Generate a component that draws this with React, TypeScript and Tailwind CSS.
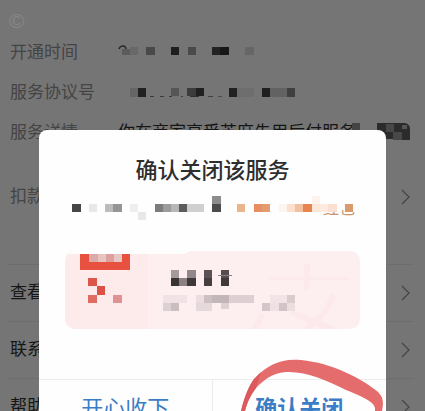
// Service detail page with the "close this service" dialog on top
import type { ReactNode } from 'react';

// x, y, width, height, colour
type Cell = [number, number, number, number, string];

interface MosaicProps {
  cells: Cell[];
  className: string;
  viewBox: string;
  children?: ReactNode;
}

function Mosaic({ cells, className, viewBox, children }: MosaicProps) {
  return (
    <svg className={className} viewBox={viewBox} aria-hidden="true">
      {children}
      {cells.map(([x, y, w, h, fill]) => (
        <rect key={`${x}-${y}-${w}`} x={x} y={y} width={w} height={h} fill={fill} />
      ))}
    </svg>
  );
}

const timeCells: Cell[] = [
  [122, 49, 8, 6, '#5c5c5c'],
  [130, 47, 8, 8, '#696969'],
  [146, 47, 9, 8, '#494949'],
  [171, 47, 8, 8, '#1e1e1e'],
  [188, 47, 8, 8, '#4a4a4a'],
  [212, 47, 8, 8, '#232323'],
  [220, 47, 9, 8, '#171717'],
  [245, 47, 9, 8, '#666666'],
];

const agreementCells: Cell[] = [
  [130, 88, 8, 9, '#656565'],
  [138, 88, 8, 9, '#212121'],
  [150, 96, 4, 1, '#3c3c3c'],
  [160, 96, 4, 1, '#3c3c3c'],
  [169, 96, 3, 1, '#3c3c3c'],
  [171, 88, 8, 8, '#565656'],
  [181, 96, 2, 1, '#3c3c3c'],
  [187, 88, 9, 8, '#3c3c3c'],
  [190, 96, 9, 1, '#303030'],
  [196, 88, 8, 8, '#202020'],
  [208, 96, 5, 1, '#404040'],
  [218, 96, 4, 1, '#4c4c4c'],
  [229, 88, 8, 9, '#222222'],
  [237, 88, 17, 9, '#6e6e6e'],
  [262, 88, 8, 9, '#202020'],
  [270, 88, 17, 9, '#626262'],
  [287, 88, 8, 9, '#404040'],
];

const amountCells: Cell[] = [
  [72, 204, 9, 8, '#464646'],
  [89, 204, 8, 8, '#e8e8e8'],
  [105, 204, 8, 8, '#bcbcbc'],
  [113, 204, 9, 8, '#959595'],
  [130, 204, 8, 8, '#eeeeee'],
  [138, 212, 8, 8, '#e8e8e8'],
  [155, 204, 8, 8, '#7c7c7c'],
  [163, 204, 8, 8, '#9c9c9c'],
  [171, 204, 8, 8, '#b6b6b6'],
  [179, 204, 8, 8, '#5c5c5c'],
  [187, 204, 17, 8, '#cfcfcf'],
  [212, 196, 9, 8, '#8c8c8c'],
  [212, 204, 9, 8, '#4b4b4b'],
  [237, 204, 8, 8, '#e8b58d'],
  [254, 204, 8, 8, '#e88f62'],
  [262, 204, 8, 8, '#e39b70'],
  [279, 204, 8, 8, '#fdf6ef'],
  [287, 204, 8, 8, '#fbe0cf'],
  [295, 204, 8, 8, '#f6bf9f'],
  [303, 204, 9, 8, '#e5854f'],
  [312, 196, 8, 8, '#fef3ec'],
  [312, 204, 8, 8, '#fde7d8'],
  [320, 204, 8, 8, '#fdebe1'],
  [328, 204, 9, 8, '#fbdfd0'],
  [345, 204, 8, 8, '#d99a6c'],
];

const cardCells: Cell[] = [
  [80, 254, 50, 16, '#e8503f'],
  [89, 254, 9, 8, '#dcaaa7'],
  [98, 254, 8, 8, '#e9c3c0'],
  [106, 254, 8, 8, '#dda09c'],
  [114, 254, 8, 8, '#e8c6c4'],
  [88, 278, 9, 8, '#dc574a'],
  [97, 286, 8, 9, '#dd5145'],
  [88, 295, 9, 8, '#df6b61'],
  [113, 295, 9, 8, '#e09292'],
  [171, 270, 8, 8, '#a59a9b'],
  [187, 270, 9, 8, '#928889'],
  [171, 278, 8, 8, '#393334'],
  [179, 278, 8, 8, '#8b8183'],
  [187, 278, 9, 8, '#3e383a'],
  [204, 270, 8, 8, '#5a5254'],
  [204, 278, 8, 8, '#453f40'],
  [221, 270, 8, 8, '#544c4e'],
  [221, 278, 8, 8, '#3f393a'],
  [218, 275, 14, 1, '#8b8183'],
  [163, 295, 24, 8, '#f1e3e5'],
  [163, 303, 8, 8, '#ddd0d2'],
  [171, 303, 8, 8, '#c9bdbf'],
  [196, 295, 8, 8, '#ecdee0'],
  [204, 295, 8, 8, '#cdc0c3'],
  [212, 295, 17, 8, '#c3b6b9'],
  [229, 295, 25, 8, '#decfd2'],
  [196, 303, 16, 8, '#e6d9db'],
  [221, 303, 8, 6, '#ddd0d2'],
  [262, 303, 8, 8, '#d4c7ca'],
  [270, 295, 17, 8, '#f2e4e6'],
  [287, 295, 8, 8, '#d9cccf'],
  [270, 303, 9, 8, '#efe1e3'],
  [279, 303, 8, 8, '#d1c3c6'],
  [287, 303, 8, 8, '#ecdee0'],
];

function Chevron() {
  return (
    <svg className="h-4 w-[9px] shrink-0" viewBox="0 0 9 16" fill="none" stroke="#444444" aria-hidden="true">
      <path d="M1 1 8 8 1 15" strokeWidth="1.2" />
    </svg>
  );
}

function LinkRow({ label }: { label: string }) {
  return (
    <button type="button" className="mr-[11px] ml-2 flex h-[57px] items-center justify-between border-t border-[#6d6d6d] pr-1 pl-0.5 text-left text-[#151515]">
      {label}
      <Chevron />
    </button>
  );
}

function ServiceDetails() {
  return (
    <main className="flex flex-col pt-px text-[17px] leading-5 whitespace-nowrap">
      <div className="flex h-8 items-end pl-[9px] text-[21px] leading-6 text-[#868686]">©</div>
      <dl className="flex flex-col text-[#444444]">
        <div className="flex h-10 items-center pl-2.5">
          <dt className="w-[108px]">开通时间</dt>
          <dd>
            <Mosaic className="h-5 w-[140px]" viewBox="118 43 140 20" cells={timeCells}>
              <path d="M119 49q1-3 4-3t3 4" fill="none" stroke="#292929" strokeWidth="1.5" />
            </Mosaic>
          </dd>
        </div>
        <div className="flex h-10 items-center pl-2.5">
          <dt className="w-[108px]">服务协议号</dt>
          <dd>
            <Mosaic className="h-5 w-[180px]" viewBox="118 83 180 20" cells={agreementCells} />
          </dd>
        </div>
        <div className="flex h-10 items-center pl-2.5">
          <dt className="w-[108px]">服务详情</dt>
          <dd className="flex items-center text-[#151515]">
            你在商家享受芝麻先用后付服务
            <svg className="-ml-[5px] h-5 w-[60px]" viewBox="352 121 60 20" aria-hidden="true">
              <path d="M353 121h8v9h-8z" fill="#444444" />
              <path d="M378 121h28q5 1 5 6v11h-8v-8h-9v7h-7l-9-6z" fill="#2b2b2b" />
              <path d="M394 130h9v8h-9zM387 122h8v8h-8z" fill="#484848" />
              <path d="M403 123h5v4h-5z" fill="#555555" />
            </svg>
          </dd>
        </div>
      </dl>
      <button type="button" className="flex h-[111px] items-center justify-between pr-[15px] pb-[24px] pl-2.5 text-left text-[#444444]">
        扣款
        <Chevron />
      </button>
      <LinkRow label="查看" />
      <LinkRow label="联系" />
      <LinkRow label="帮助" />
    </main>
  );
}

function ConfirmDialog() {
  return (
    <section
      role="dialog"
      aria-labelledby="dialog-title"
      className="absolute inset-x-[39px] top-[130px] rounded-t-lg bg-[#fefefe] pt-[27px]"
    >
      <h1 id="dialog-title" className="text-center text-[22px] leading-7 font-medium text-[#2e2e2e]">
        确认关闭该服务
      </h1>
      <Mosaic className="mx-auto mt-2 h-7 w-[290px]" viewBox="68 193 290 28" cells={amountCells}>
        <text x="323" y="214" fontSize="16" fill="#c69570">红包</text>
        <path d="M320 196h38v14h-38z" fill="#fefefe" />
      </Mosaic>

      <div className="mx-[26px] mt-[30px] overflow-hidden rounded-[10px] bg-[#fdeff0]">
        <Mosaic className="h-[78px] w-[295px]" viewBox="65 251 295 78" cells={cardCells}>
          <path d="M65 251h83v78H65z" fill="#fdebeb" />
          <path d="M65 251h125l-5 3H65z" fill="#fefefe" />
          <g fill="none" stroke="#fce9eb" strokeWidth="6">
            <path d="M307 264v26M334 294l-8 17-21 20M291 312l45 19M263 314l-9 17" />
            <path d="M270 279h80" strokeWidth="3" />
          </g>
        </Mosaic>
      </div>

      <div className="mt-[50px] grid grid-cols-2 border-t border-[#ececec] text-[22px] text-[#3b7cc6]">
        <button type="button" className="h-14 border-r border-[#ececec]">
          开心收下
        </button>
        <button type="button" className="relative h-14 font-bold">
          确认关闭
          {/* hand-drawn marker ring */}
          <svg className="absolute -top-6 left-6 h-[55px] w-[150px]" viewBox="237 356 150 55" aria-hidden="true">
            <path
              d="M241 411C245 395 249 386 254 379C268 364 282 358 301 360C332 363 361 378 378 392C383 397 384 402 382 411H375C376 404 371 400 346 390C326 380 306 371 286 372C271 373 263 381 256 388C250 396 247 403 245 411Z"
              fill="#e56c6c"
            />
            <path d="M241 411C245 395 249 386 254 379L261 372L256 388C250 396 247 403 245 411Z" fill="#dc5a5d" />
          </svg>
        </button>
      </div>
    </section>
  );
}

export default function App() {
  return (
    <div className="relative h-screen overflow-hidden bg-[#757575] font-['Liberation_Sans','Noto_Sans_CJK_SC',sans-serif]">
      <ServiceDetails />
      <ConfirmDialog />
    </div>
  );
}
